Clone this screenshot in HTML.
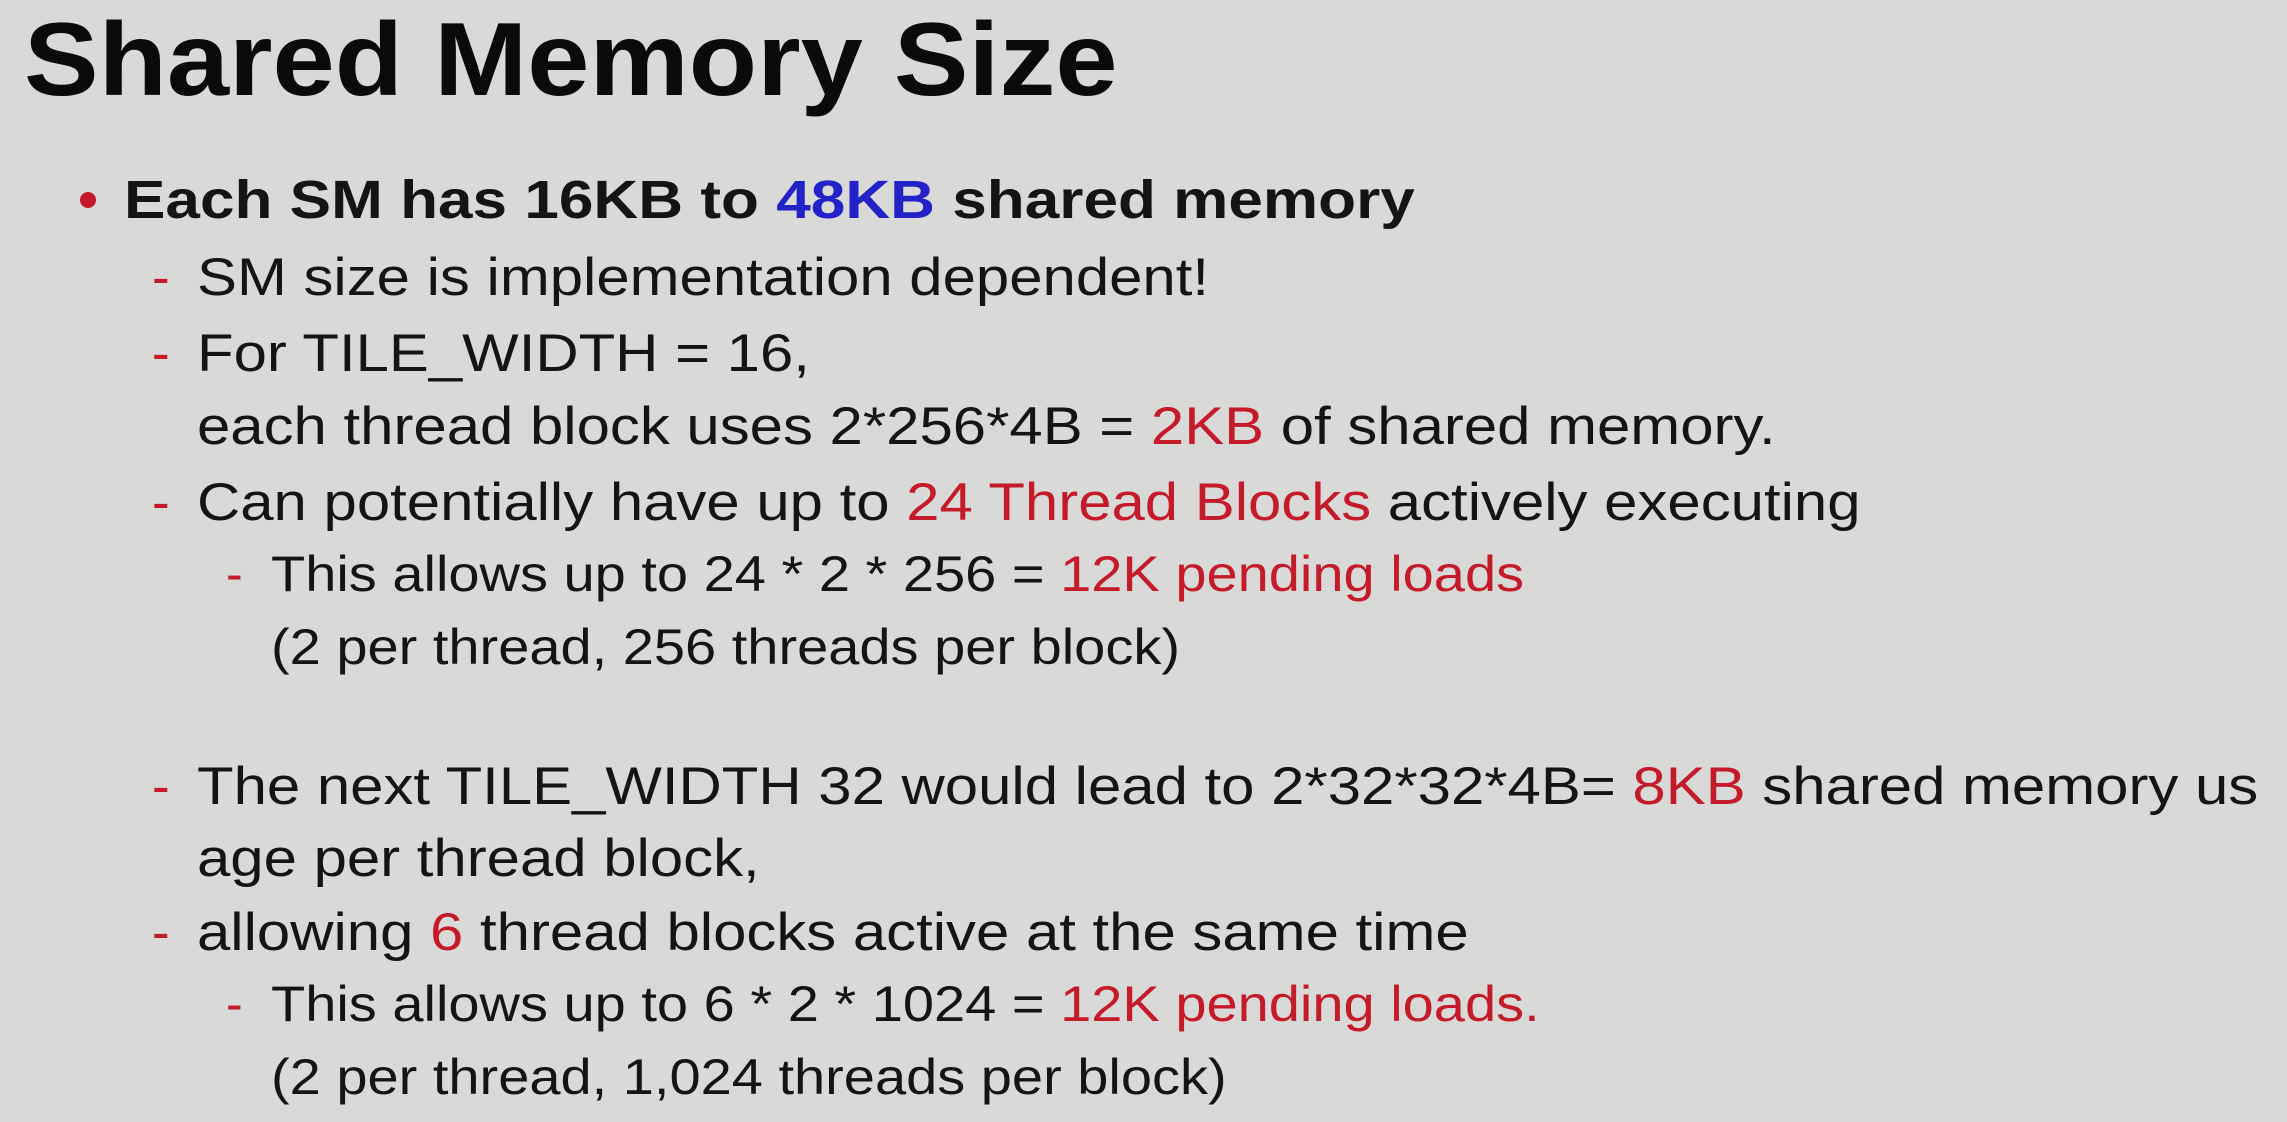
<!DOCTYPE html>
<html><head><meta charset="utf-8"><style>
html,body{margin:0;padding:0}
body{width:2287px;height:1122px;background:#d9d9d8;position:relative;overflow:hidden;font-family:"Liberation Sans",sans-serif;color:#141414}
.l{position:absolute;white-space:nowrap;line-height:1;transform-origin:0 0}
.t{font-weight:bold;font-size:104px;left:24px;top:8px;color:#0a0a0a;transform:scaleX(1.075)}
.b{font-size:53px}
.s{font-size:50px}
.x{transform:scaleX(1.13)}
.xs{transform:scaleX(1.12)}
.r{color:#c41a2a}
.bl{color:#2222c8}
.m{position:absolute;color:#c41a2a}
</style></head><body>
<div class="l t">Shared Memory Size</div>
<div class="m" style="left:80px;top:192px;width:16px;height:16px;border-radius:50%;background:#c41a2a"></div>
<div class="l" style="left:124px;top:173px;font-size:54px;font-weight:bold;transform:scaleX(1.15)">Each SM has 16KB to <span class="bl">48KB</span> shared memory</div>

<div class="l b" style="left:152px;top:251px"><span class="r">-</span></div>
<div class="l b x" style="left:197px;top:251px">SM size is implementation dependent!</div>
<div class="l b" style="left:152px;top:327px"><span class="r">-</span></div>
<div class="l b x" style="left:197px;top:327px">For TILE_WIDTH = 16,</div>
<div class="l b x" style="left:197px;top:400px">each thread block uses 2*256*4B = <span class="r">2KB</span> of shared memory.</div>
<div class="l b" style="left:152px;top:476px"><span class="r">-</span></div>
<div class="l b x" style="left:197px;top:476px">Can potentially have up to <span class="r">24 Thread Blocks</span> actively executing</div>
<div class="l s" style="left:226px;top:549px"><span class="r">-</span></div>
<div class="l s xs" style="left:271px;top:549px">This allows up to 24 * 2 * 256 = <span class="r">12K pending loads</span></div>
<div class="l s xs" style="left:271px;top:622px">(2 per thread, 256 threads per block)</div>

<div class="l b" style="left:152px;top:760px"><span class="r">-</span></div>
<div class="l b x" style="left:197px;top:760px">The next TILE_WIDTH 32 would lead to 2*32*32*4B= <span class="r">8KB</span> shared memory us</div>
<div class="l b x" style="left:197px;top:832px">age per thread block,</div>
<div class="l b" style="left:152px;top:906px"><span class="r">-</span></div>
<div class="l b x" style="left:197px;top:906px">allowing <span class="r">6</span> thread blocks active at the same time</div>
<div class="l s" style="left:226px;top:979px"><span class="r">-</span></div>
<div class="l s xs" style="left:271px;top:979px">This allows up to 6 * 2 * 1024 = <span class="r">12K pending loads.</span></div>
<div class="l s xs" style="left:271px;top:1052px">(2 per thread, 1,024 threads per block)</div>
</body></html>
